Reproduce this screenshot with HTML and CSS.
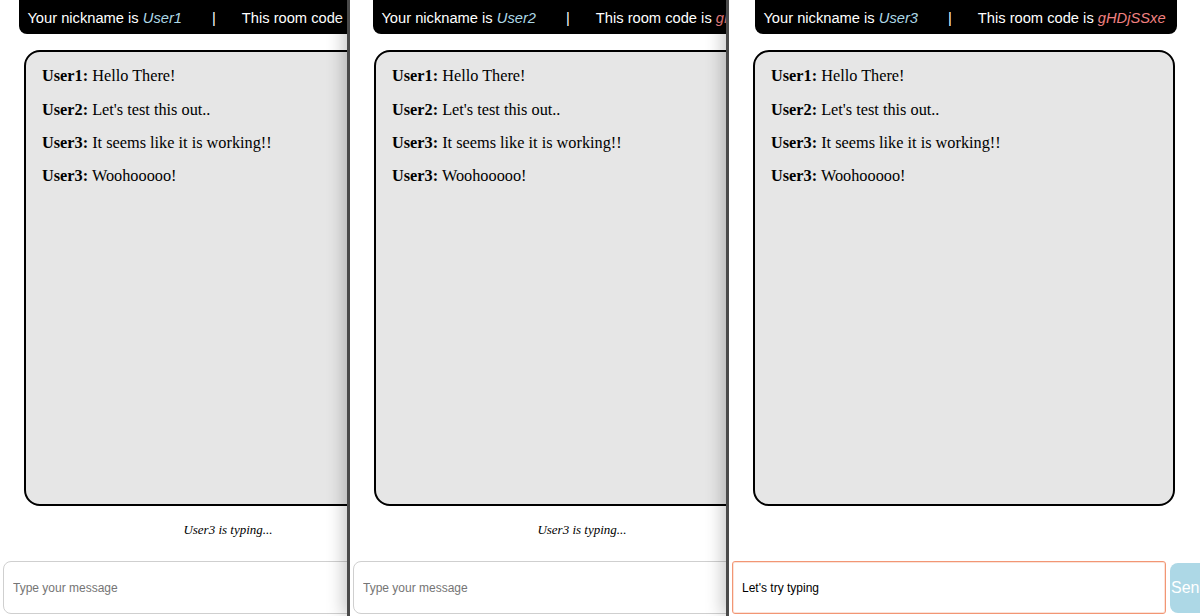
FILE: index.html
```html
<!DOCTYPE html>
<html lang="en">
<head>
<meta charset="utf-8">
<title>Chat rooms</title>
<link rel="stylesheet" href="styles.css">
</head>
<body>
<div class="desktop">
  <section class="win win-1">
    <div class="app app-1">
      <header class="bar"><span>Your nickname is <em class="nick">User1</em></span><span class="sep">|</span><span>This room code is <em class="code">gHDjSSxe</em></span></header>
      <div class="chat">
        <p><b>User1:</b> Hello There!</p>
        <p><b>User2:</b> Let's test this out..</p>
        <p><b>User3:</b> It seems like it is working!!</p>
        <p><b>User3:</b> Woohooooo!</p>
      </div>
      <div class="typing">User3 is typing...</div>
      <div class="compose"><input class="msg" type="text" placeholder="Type your message"><button class="send">Send</button></div>
    </div>
  </section>
  <section class="win win-2">
    <div class="app app-2">
      <header class="bar"><span>Your nickname is <em class="nick">User2</em></span><span class="sep">|</span><span>This room code is <em class="code">gHDjSSxe</em></span></header>
      <div class="chat">
        <p><b>User1:</b> Hello There!</p>
        <p><b>User2:</b> Let's test this out..</p>
        <p><b>User3:</b> It seems like it is working!!</p>
        <p><b>User3:</b> Woohooooo!</p>
      </div>
      <div class="typing">User3 is typing...</div>
      <div class="compose"><input class="msg" type="text" placeholder="Type your message"><button class="send">Send</button></div>
    </div>
  </section>
  <section class="win win-3">
    <div class="app app-3">
      <header class="bar"><span>Your nickname is <em class="nick">User3</em></span><span class="sep">|</span><span>This room code is <em class="code">gHDjSSxe</em></span></header>
      <div class="chat">
        <p><b>User1:</b> Hello There!</p>
        <p><b>User2:</b> Let's test this out..</p>
        <p><b>User3:</b> It seems like it is working!!</p>
        <p><b>User3:</b> Woohooooo!</p>
      </div>
      <div class="typing"></div>
      <div class="compose"><input class="msg msg-focus" type="text" value="Let's try typing" placeholder="Type your message"><button class="send">Send</button></div>
    </div>
  </section>
</div>
</body>
</html>
```

FILE: styles.css
```css
* { box-sizing: border-box; }

html, body {
  margin: 0;
  padding: 0;
  background: #ffffff;
}

.desktop {
  display: flex;
  width: 1200px;
  height: 616px;
  overflow: hidden;
}

.win {
  position: relative;
  height: 616px;
  overflow: hidden;
  background: #ffffff;
}

.win-1 { flex: 0 0 347px; z-index: 1; }
.win-2 {
  flex: 0 0 379px;
  z-index: 2;
  border-left: 3px solid #4a4a4a;
  box-shadow: -4px 0 16px rgba(0, 0, 0, 0.22);
}
.win-3 {
  flex: 0 0 474px;
  z-index: 3;
  border-left: 3px solid #4a4a4a;
  box-shadow: -4px 0 16px rgba(0, 0, 0, 0.22);
}

.app {
  height: 616px;
  background: #ffffff;
}
.app-1 { width: 460px; }
.app-2 { width: 468px; }
.app-3 { width: 474px; }

.bar {
  display: flex;
  align-items: center;
  width: fit-content;
  height: 34px;
  margin: 0 auto;
  padding: 1px 11px 0 8px;
  background: #000000;
  color: #ffffff;
  border-radius: 0 0 8px 8px;
  font-family: "Liberation Sans", Arial, sans-serif;
  font-size: 14.7px;
  white-space: nowrap;
}

.nick { color: #add8e6; font-style: italic; }
.code { color: #f08080; font-style: italic; }
.sep { margin: 0 26px 0 30px; }

.chat {
  width: calc(100% - 52px);
  height: 456px;
  margin: 16px 0 0 24px;
  padding: 0 16px;
  background: #e6e6e6;
  border: 2px solid #000000;
  border-radius: 16px;
  font-family: "Liberation Serif", "Times New Roman", serif;
  font-size: 16.3px;
  line-height: 19px;
  color: #000000;
}
.chat p { margin: 14.3px 0; }

.typing {
  height: 55px;
  padding-bottom: 8px;
  padding-right: 4px;
  display: flex;
  align-items: center;
  justify-content: center;
  font-family: "Liberation Serif", "Times New Roman", serif;
  font-style: italic;
  font-size: 13px;
  color: #000000;
}

.compose {
  display: flex;
  align-items: center;
  gap: 4px;
  height: 53px;
  padding-left: 3px;
}

.msg {
  flex: 0 0 434px;
  width: 434px;
  height: 53px;
  padding: 0 9px;
  border: 1px solid #cfcfcf;
  border-radius: 8px;
  background: #ffffff;
  font-family: "Liberation Sans", Arial, sans-serif;
  font-size: 12px;
  color: #000000;
  outline: none;
}
.msg::placeholder { color: #757575; }

.msg-focus {
  border: 1px solid #f29674;
  border-radius: 3px;
  box-shadow: inset 0 0 0 1px #fbe3d9;
}

.send {
  flex: 0 0 50px;
  height: 50px;
  padding: 0 0 0 1px;
  text-align: left;
  border: none;
  border-radius: 8px;
  background: #add8e6;
  color: #ffffff;
  font-family: "Liberation Sans", Arial, sans-serif;
  font-size: 16px;
}
```
